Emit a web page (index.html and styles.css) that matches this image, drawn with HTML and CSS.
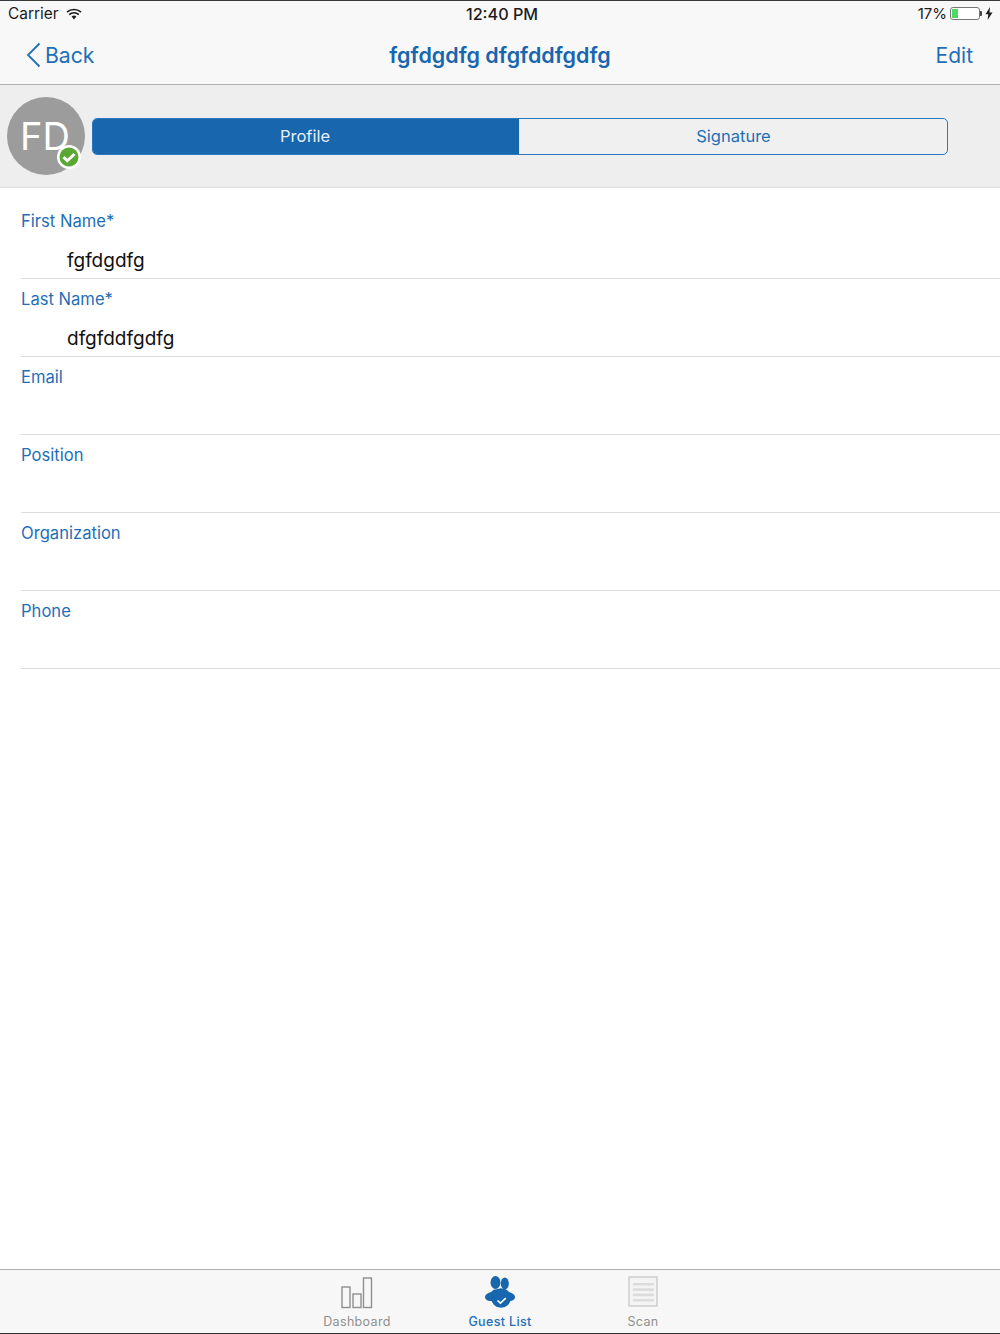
FILE: index.html
```html
<!DOCTYPE html>
<html lang="en">
<head>
<meta charset="utf-8">
<title>Guest profile</title>
<link rel="stylesheet" href="styles.css">
</head>
<body>
<div class="app">
  <header class="topbar">
    <div class="status">
      <div class="status-left">
        <span>Carrier</span>
        <svg class="wifi" width="16" height="12" viewBox="0 0 16 12"><path d="M8 11.500 5.600 8.600a3.600 3.600 0 0 1 4.800 0Z" fill="#1c1c1c"/><path d="M1 4.200a10.400 10.400 0 0 1 14 0M3.200 6.600a7.200 7.200 0 0 1 9.600 0" fill="none" stroke="#1c1c1c" stroke-width="1.700"/></svg>
      </div>
      <div class="status-time">12:40 PM</div>
      <div class="status-right">
        <span>17%</span>
        <div class="battery"><div class="battery-level"></div></div>
        <div class="battery-tip"></div>
        <svg class="bolt" width="8" height="13" viewBox="0 0 8 13"><path d="M5 0 .5 7.300h2.800L2.600 13 7.500 5.400H4.500Z" fill="#1c1c1c"/></svg>
      </div>
    </div>
    <nav class="navbar">
      <a class="back">
        <svg width="15" height="26" viewBox="0 0 15 26"><path d="M13.500 1.500 2 13l11.500 11.500" fill="none" stroke="#1f6fb8" stroke-width="1.800"/></svg>
        <span>Back</span>
      </a>
      <h1 class="title">fgfdgdfg dfgfddfgdfg</h1>
      <a class="edit">Edit</a>
    </nav>
  </header>

  <section class="head">
    <div class="avatar">
      <span>FD</span>
      <svg class="badge" width="24" height="24" viewBox="0 0 24 24"><circle cx="12" cy="12" r="12" fill="#fff"/><circle cx="12" cy="12" r="9.500" fill="#5aa832"/><path d="M6.500 12.200l3.800 3.600 7.200-6.800" fill="none" stroke="#fff" stroke-width="3"/></svg>
    </div>
    <div class="segments">
      <div class="segment segment-on">Profile</div>
      <div class="segment">Signature</div>
    </div>
  </section>

  <main class="form">
    <div class="field"><div class="label">First Name*</div><div class="value">fgfdgdfg</div></div>
    <div class="field"><div class="label">Last Name*</div><div class="value">dfgfddfgdfg</div></div>
    <div class="field"><div class="label">Email</div><div class="value"></div></div>
    <div class="field"><div class="label">Position</div><div class="value"></div></div>
    <div class="field"><div class="label">Organization</div><div class="value"></div></div>
    <div class="field"><div class="label">Phone</div><div class="value"></div></div>
  </main>

  <footer class="tabbar">
    <div class="tab">
      <svg width="32" height="33" viewBox="0 0 32 33"><g fill="none" stroke="#8f8f8f" stroke-width="1.400"><rect x="1" y="11" width="8" height="20.500"/><rect x="12" y="18" width="8" height="13.500"/><rect x="22.500" y="2" width="8" height="29.500"/></g></svg>
      <span>Dashboard</span>
    </div>
    <div class="tab tab-on">
      <svg width="32" height="33" viewBox="0 0 32 33"><g fill="#1866ae"><ellipse cx="20.800" cy="7.500" rx="4" ry="6"/><ellipse cx="11.500" cy="6.500" rx="5" ry="6.500"/><path d="M1 21c0-2 2-4 6-5l3-2.500h12l3 2.500c4 1 6 3 6 5 0 2-2 4-5 4H6c-3 0-5-2-5-4Z"/><circle cx="17" cy="22" r="9.800"/></g><path d="M13.500 24.500l2.900 2.600 5.400-5" fill="none" stroke="#fff" stroke-width="1.600"/></svg>
      <span>Guest List</span>
    </div>
    <div class="tab">
      <svg width="30" height="33" viewBox="0 0 30 33"><rect x="1" y="1" width="28" height="29" fill="#f4f4f4" stroke="#c8c8c8" stroke-width="1.300"/><g fill="#dcdcdc"><rect x="4.700" y="7" width="21.300" height="2.600" rx="1"/><rect x="4.700" y="12.300" width="21.300" height="2.600" rx="1"/><rect x="4.700" y="17.600" width="21.300" height="2.600" rx="1"/><rect x="4.700" y="23" width="21.300" height="2.600" rx="1"/></g></svg>
      <span>Scan</span>
    </div>
  </footer>
</div>
</body>
</html>
```

FILE: styles.css
```css
* { box-sizing: border-box; }
html, body { margin: 0; height: 100%; }
body { font-family: Inter, "Noto Sans", sans-serif; background: #fff; color: #000; }
.app { width: 1000px; height: 1334px; display: flex; flex-direction: column; }

.topbar { height: 85px; background: #f8f8f8; border-top: 1px solid #3a3a3a; border-bottom: 1px solid #b0b0b0; flex: none; }
.status { height: 25px; padding: 0 7px 0 8px; display: grid; grid-template-columns: 1fr auto 1fr; align-items: center; font-size: 15.400px; color: #1c1c1c; }
.status-left { display: flex; align-items: center; gap: 8px; }
.status-time { font-weight: 500; font-size: 16.200px; padding-left: 3px; }
.status-right { display: flex; align-items: center; justify-content: flex-end; font-size: 15px; }
.battery { width: 30px; height: 13px; margin-left: 3px; border: 1px solid #777; border-radius: 3px; padding: 1px; background: #fff; }
.battery-level { width: 6px; height: 100%; background: #4cd964; }
.battery-tip { width: 2px; height: 5px; background: #444; border-radius: 0 1px 1px 0; }
.bolt { margin-left: 3px; }

.navbar { height: 58px; display: flex; align-items: center; justify-content: space-between; padding: 0 27px 0 26px; color: #1f6fb8; font-size: 21.200px; position: relative; }
.back { display: flex; align-items: center; gap: 4px; }
.title { position: absolute; left: 0; right: 0; margin: 0; text-align: center; font-size: 21.500px; font-weight: 600; color: #1866ae; }
.edit { position: relative; font-size: 21px; }

.head { height: 103px; flex: none; background: #eeeeee; border-bottom: 1px solid #dedede; display: flex; align-items: center; padding: 0 52px 0 7px; gap: 7px; }
.avatar { width: 78px; height: 78px; border-radius: 50%; background: #9c9c9c; color: #fff; font-size: 38px; font-weight: 400; display: flex; align-items: center; justify-content: center; position: relative; flex: none; margin-top: -1px; padding-right: 2px; }
.badge { position: absolute; right: 4px; bottom: 6px; }
.segments { flex: 1; height: 37px; margin-top: 1px; display: grid; grid-template-columns: 1fr 1fr; border: 1.500px solid #2a78c0; border-radius: 5px; overflow: hidden; background: #f0f0f0; }
.segment { display: flex; align-items: center; justify-content: center; font-size: 16.500px; color: #1f6fb8; padding-bottom: 1px; }
.segment-on { background: #1866ae; color: #e8eef6; padding-right: 2px; border-right: 1px solid #dfe8f2; }

.form { flex: 1; padding-left: 21px; }
.field { height: 78px; border-bottom: 1px solid #dcdcdc; display: flex; flex-direction: column; }
.field:first-child { height: 91px; padding-top: 23px; }
.field:not(:first-child) { padding-top: 10px; }
.label { font-size: 16.600px; line-height: 21px; color: #1f6fb8; }
.value { font-size: 19px; line-height: 24px; margin-top: 17px; padding-left: 46px; color: #111; }

.tabbar { height: 65px; flex: none; background: #f7f7f7; border-top: 1px solid #adadad; border-bottom: 1px solid #333; display: flex; justify-content: center; }
.tab { width: 143px; display: flex; flex-direction: column; align-items: center; justify-content: flex-end; gap: 5px; font-size: 12.500px; letter-spacing: 0.350px; color: #8f8f8f; padding-bottom: 4px; }
.tab-on { color: #1f6fb8; font-weight: 500; }
```
